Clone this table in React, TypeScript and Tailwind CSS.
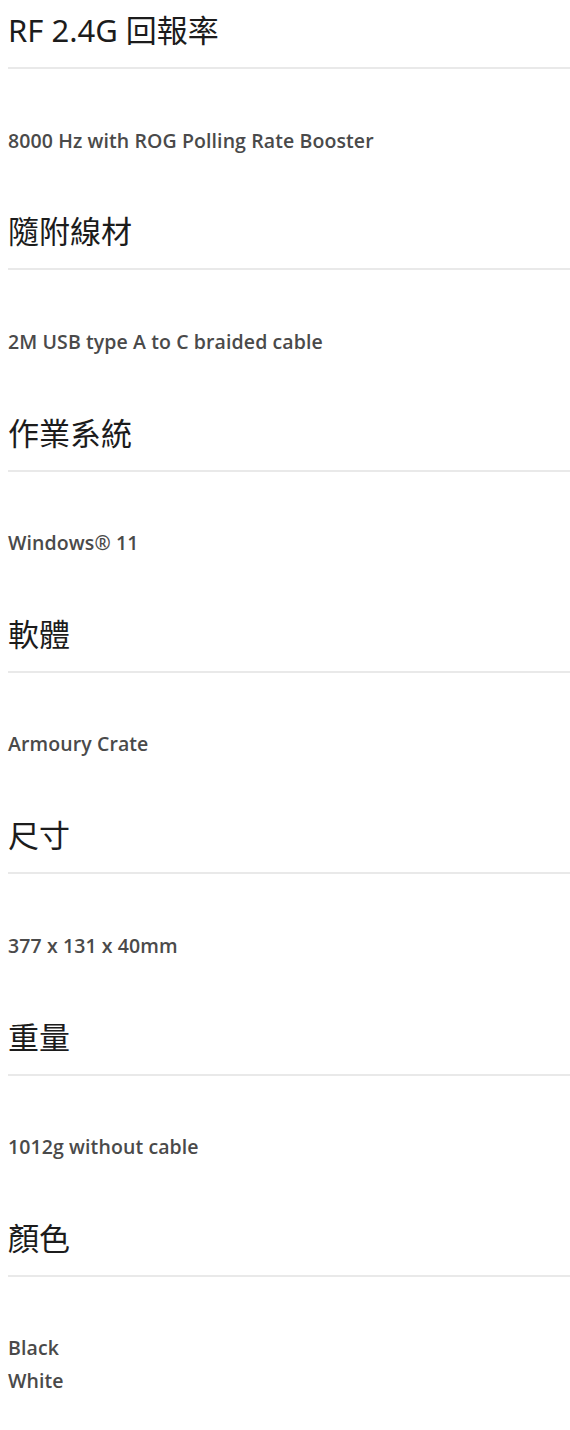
import React from "react";

const specs: { title: string; values: string[] }[] = [
  { title: "RF 2.4G 回報率", values: ["8000 Hz with ROG Polling Rate Booster"] },
  { title: "隨附線材", values: ["2M USB type A to C braided cable"] },
  { title: "作業系統", values: ["Windows® 11"] },
  { title: "軟體", values: ["Armoury Crate"] },
  { title: "尺寸", values: ["377 x 131 x 40mm"] },
  { title: "重量", values: ["1012g without cable"] },
  { title: "顏色", values: ["Black", "White"] },
];

export default function App() {
  return (
    <div className="w-[570px] bg-white pl-[8px]">
      {specs.map((s) => (
        <div key={s.title} className="pb-[44.83px]">
          <h3 className="pt-[10px] text-[31px] leading-[40px] font-normal text-[#1c1c1c] [font-family:'Noto_Sans','Noto_Sans_CJK_TC',sans-serif]">
            {s.title}
          </h3>
          <div className="mt-[17px] h-[2px] bg-[#e9e9e9]" />
          <div className="mt-[54.5px] text-[19.5px] leading-[33px] font-semibold tracking-[0.1px] text-[#4a4a4a] [font-family:'Open_Sans','Noto_Sans',sans-serif]">
            {s.values.map((v) => (
              <div key={v}>{v}</div>
            ))}
          </div>
        </div>
      ))}
    </div>
  );
}
